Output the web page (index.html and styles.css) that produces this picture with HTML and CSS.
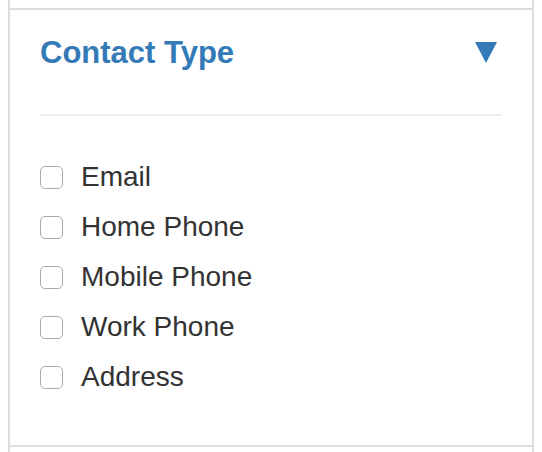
FILE: index.html
```html
<!DOCTYPE html>
<html lang="en">
<head>
  <meta charset="UTF-8"/>
  <title>Contact Type filter</title>
  <link rel="stylesheet" href="styles.css">
</head>
<body>
  <div class="sidebar">
    <section class="facet">
      <div class="facet-head">
        <h2 class="facet-title">Contact Type</h2>
        <svg class="caret" width="22" height="21" viewBox="0 0 22 21">
          <polygon points="0,0 22,0 11,21" fill="#337ab7"/>
        </svg>
      </div>
      <hr class="facet-rule">
      <ul class="options">
        <li><label><input type="checkbox"> Email</label></li>
        <li><label><input type="checkbox"> Home Phone</label></li>
        <li><label><input type="checkbox"> Mobile Phone</label></li>
        <li><label><input type="checkbox"> Work Phone</label></li>
        <li><label><input type="checkbox"> Address</label></li>
      </ul>
    </section>
  </div>
</body>
</html>
```

FILE: styles.css
```css
* { margin:0; padding:0; box-sizing:border-box }
body {
  background:#fff; font-family:"Liberation Sans",Arial,sans-serif;
  color:#333; overflow:hidden;
}

/* sidebar frame */
.sidebar {
  margin-left:8px; width:526px; min-height:100vh;
  border-left:2px solid #ddd; border-right:2px solid #ddd;
  padding-top:8px;
}
.facet {
  border-top:2px solid #ddd; border-bottom:2px solid #ddd;
  padding:25px 30px 43px;
}

/* header */
.facet-head {
  display:flex; align-items:center; justify-content:space-between;
}
.facet-title {
  font-size:31px; line-height:36px; font-weight:bold; color:#337ab7;
}
.caret { margin-right:5px; margin-top:-1px; }
.facet-rule {
  border:none; border-top:2px solid #eee;
  margin-top:43px;
}

/* checkbox list */
.options { list-style:none; padding-top:36px; }
.options label {
  display:flex; align-items:center; gap:18px;
  font-size:28px; line-height:50px;
}
.options input {
  appearance:none; -webkit-appearance:none;
  width:23px; height:23px; margin:0;
  border:1px solid #aaa; border-radius:5px; background:#fff;
}
```
